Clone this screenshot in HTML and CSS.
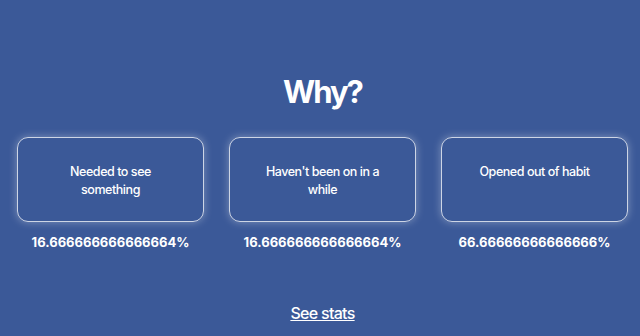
FILE: index.html
```html
<!DOCTYPE html>
<html>
<head>
<meta charset="utf-8">
<link rel="stylesheet" href="styles.css">
</head>
<body>
<main class="page">
  <h1 class="title">Why?</h1>
  <div class="options">
    <div class="option">
      <div class="card">Needed to see something</div>
      <div class="pct">16.666666666666664%</div>
    </div>
    <div class="option">
      <div class="card">Haven't been on in a while</div>
      <div class="pct">16.666666666666664%</div>
    </div>
    <div class="option">
      <div class="card">Opened out of habit</div>
      <div class="pct">66.66666666666666%</div>
    </div>
  </div>
  <a class="stats" href="#">See stats</a>
</main>
</body>
</html>
```
FILE: styles.css
```css
html, body {
  margin: 0;
  padding: 0;
  background: #3b5998;
  color: #ffffff;
  font-family: Inter, "Noto Sans", sans-serif;
}
.page {
  height: 336px;
  box-sizing: border-box;
  padding: 74px 12px 0 17px;
  display: flex;
  flex-direction: column;
  align-items: center;
}
.title {
  margin: 0;
  font-size: 31px;
  line-height: 36px;
  font-weight: 700;
  letter-spacing: -2px;
}
.options {
  margin-top: 27px;
  width: 100%;
  display: grid;
  grid-template-columns: repeat(3, 1fr);
  column-gap: 25px;
}
.option {
  display: flex;
  flex-direction: column;
  align-items: center;
}
.card {
  width: 100%;
  height: 85px;
  box-sizing: border-box;
  border: 1px solid rgba(255, 255, 255, 0.75);
  border-radius: 11px;
  box-shadow: 0 0 8px rgba(255, 255, 255, 0.35);
  padding: 25px 25px 0;
  text-align: center;
  font-size: 12.5px;
  line-height: 18px;
  font-weight: 500;
  letter-spacing: -0.45px;
}
.pct {
  margin-top: 12px;
  font-size: 13px;
  line-height: 16px;
  font-weight: 700;
}
.stats {
  margin-top: 53px;
  color: #ffffff;
  font-size: 16px;
  line-height: 20px;
  font-weight: 500;
  letter-spacing: -0.7px;
  text-decoration: underline;
}
```
